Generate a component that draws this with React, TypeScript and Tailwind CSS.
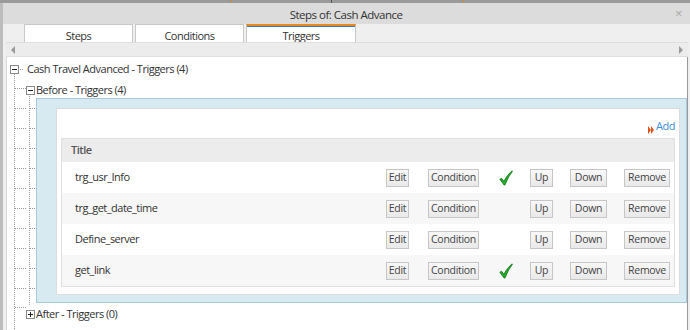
import React from "react";

const rows = [
  { title: "trg_usr_Info", cond: true },
  { title: "trg_get_date_time", cond: false },
  { title: "Define_server", cond: false },
  { title: "get_link", cond: true },
];

function Btn({ label, w }: { label: string; w: string }) {
  return (
    <button
      className={`${w} h-[18px] shrink-0 border border-[#c6c6c6] bg-gradient-to-b from-[#f8f8f8] to-[#e9e9e9] text-[10.5px] tracking-[-0.3px] leading-none text-[#444] flex items-center justify-center`}
    >
      {label}
    </button>
  );
}

function Check() {
  return (
    <svg width="14" height="16" viewBox="0 0 14 16">
      <path
        d="M0.8 9.2 L2.6 8.2 L4.8 11.2 Q8 5.2 13 0.8 L13.4 1.4 Q9.6 6 6 15 L5 15 Z"
        fill="#1fae25"
        stroke="#0b6a12"
        strokeWidth="0.7"
        strokeLinejoin="round"
      />
    </svg>
  );
}

function Toggle({ open }: { open: boolean }) {
  return (
    <svg width="9" height="9" viewBox="0 0 9 9" className="shrink-0">
      <rect x="0.5" y="0.5" width="8" height="8" fill="#fff" stroke="#8a8a8a" />
      <path d="M2 4.5 H7" stroke="#222" />
      {!open && <path d="M4.5 2 V7" stroke="#222" />}
    </svg>
  );
}

function TreeLines() {
  const stubs = [108, 128, 148, 168, 188, 208, 228, 248, 268, 288];
  return (
    <svg
      className="absolute left-0 top-0 pointer-events-none"
      width="40"
      height="330"
      viewBox="0 0 40 330"
    >
      <g stroke="#9a9a9a" strokeDasharray="1 1" strokeWidth="1" shapeRendering="crispEdges">
        <path d="M14.5 74 V330" />
        <path d="M18 69.5 H24" />
        <path d="M15 88.5 H26" />
        <path d="M29.5 94 V306" />
        <path d="M15 307.5 H26" />
        {stubs.map((y) => (
          <g key={y}>
            <path d={`M15 ${y + 0.5} H26`} />
            <path d={`M30 ${y + 0.5} H36`} />
          </g>
        ))}
      </g>
    </svg>
  );
}

export default function App() {
  return (
    <div className="relative w-[690px] h-[330px] overflow-hidden flex flex-col bg-[#b9b9b9] font-['Open_Sans',sans-serif] text-[#333] tracking-[-0.5px]">
      {/* backdrop strip */}
      <div className="h-[3px] shrink-0 bg-[#9a9a9a] flex">
        <div className="w-[10px]" />
        <div className="w-[1px] bg-[#d08a2c] ml-[220px]" />
        <div className="w-[1px] bg-[#555] ml-[100px]" />
        <div className="w-[1px] bg-[#d08a2c] ml-[130px]" />
      </div>
      <div className="flex flex-1 min-h-0">
        <div className="w-[3px] shrink-0 bg-[#bdbdbd]" />
        <div className="flex-1 flex flex-col bg-[#efefef]">
          {/* header */}
          <div className="h-[21px] shrink-0 bg-[#dcdcdc] flex items-center pl-[14px] pr-[8px] pt-[3px]">
            <div className="flex-1 text-center text-[11.5px] text-[#333]">Steps of: Cash Advance</div>
            <span className="text-[13px] leading-none text-[#a8a8a8] -mt-[3px]">×</span>
          </div>
          {/* tabs */}
          <div className="h-[18px] shrink-0 flex items-end gap-[2px] pl-[21px]">
            <div className="w-[109px] h-[18px] bg-white border border-b-0 border-[#c8c8c8] flex items-center justify-center text-[11px] pt-[5px]">
              Steps
            </div>
            <div className="w-[109px] h-[18px] bg-white border border-b-0 border-[#c8c8c8] flex items-center justify-center text-[11px] pt-[5px]">
              Conditions
            </div>
            <div className="w-[110px] h-[18px] bg-white border border-b-0 border-[#c8c8c8] border-t-2 border-t-[#e8891f] shadow-[inset_0_1px_0_#3a78c4] flex items-center justify-center text-[11px] pt-[4px]">
              Triggers
            </div>
          </div>
          {/* scroll bar */}
          <div className="h-[15px] shrink-0 ml-[3px] mr-[2px] bg-[#ececec] border-y border-[#dedede] flex items-center justify-between px-[5px]">
            <span className="w-0 h-0 border-y-[4px] border-y-transparent border-r-[4px] border-r-[#9a9a9a]" />
            <span className="w-0 h-0 border-y-[4px] border-y-transparent border-l-[4px] border-l-[#9a9a9a]" />
          </div>
          {/* content */}
          <div className="flex-1 ml-[3px] mr-[2px] bg-white border-l border-[#d8d8d8] border-r border-r-[#9a9a9a] flex flex-col text-[11px]">
            <div className="h-[24px] shrink-0 flex items-center pl-[3px] pt-[1px]">
              <Toggle open />
              <span className="ml-[8px]">Cash Travel Advanced - Triggers (4)</span>
            </div>
            <div className="h-[17px] shrink-0 flex items-center pl-[19px] pt-[1px]">
              <Toggle open />
              <span className="ml-[1px]">Before - Triggers (4)</span>
            </div>
            {/* before panel */}
            <div className="ml-[29px] h-[205px] shrink-0 bg-[#d7e9f1] border border-[#a7cbdc] pl-[19px] pr-[6px] pt-[9px]">
              <div className="h-[187px] bg-white border border-[#dcdcdc] px-[4px] flex flex-col">
                <div className="h-[29px] flex items-end justify-end pb-[4px] pr-[0px]">
                  <svg width="6" height="8" viewBox="0 0 6 8" className="mr-[2px]">
                    <path d="M0 0 L3 4 L0 8 Z M3 0 L6 4 L3 8 Z" fill="#e0531e" />
                  </svg>
                  <span className="text-[#3b8fd9]">Add</span>
                </div>
                <div className="border border-[#e0e0e0]">
                  <div className="h-[23px] bg-[#ececec] flex items-center pl-[9px] text-[#555] font-semibold">
                    Title
                  </div>
                  {rows.map((r, i) => (
                    <div
                      key={r.title}
                      className={`h-[31px] flex items-center ${i % 2 === 1 ? "bg-[#f7f7f7]" : "bg-white"}`}
                    >
                      <div className="w-[324px] pl-[13px]">{r.title}</div>
                      <Btn label="Edit" w="w-[23px]" />
                      <div className="w-[19px]" />
                      <Btn label="Condition" w="w-[51px]" />
                      <div className="w-[51px] flex justify-center pl-[2px]">{r.cond && <Check />}</div>
                      <Btn label="Up" w="w-[23px]" />
                      <div className="w-[17px]" />
                      <Btn label="Down" w="w-[37px]" />
                      <div className="w-[17px]" />
                      <Btn label="Remove" w="w-[46px]" />
                    </div>
                  ))}
                </div>
              </div>
            </div>
            <div className="h-[22px] shrink-0 flex items-center pl-[19px] pt-[1px]">
              <Toggle open={false} />
              <span className="ml-[1px]">After - Triggers (0)</span>
            </div>
          </div>
        </div>
      </div>
      <TreeLines />
    </div>
  );
}
